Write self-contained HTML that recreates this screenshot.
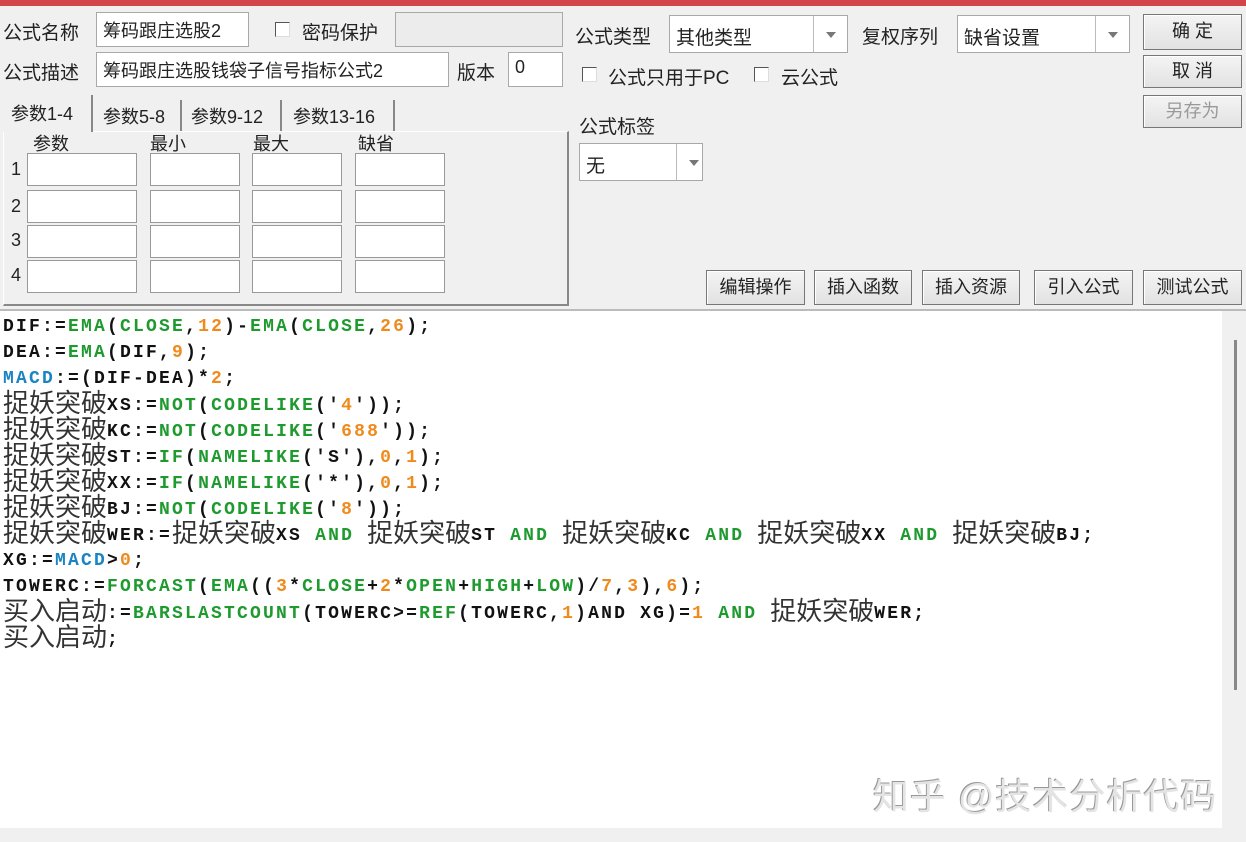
<!DOCTYPE html>
<html><head><meta charset="utf-8"><style>
*{margin:0;padding:0;box-sizing:border-box}
body{width:1246px;height:842px;background:#f0f0f0;position:relative;overflow:hidden;font-family:"Liberation Sans","Noto Sans CJK SC",sans-serif;font-size:18px;color:#222}
.a{position:absolute;white-space:nowrap}
.in{position:absolute;background:#fff;border:1px solid #a8a8a8;font-size:18px;padding:4px 0 0 6px;color:#222;white-space:nowrap}
.cb{position:absolute;width:15px;height:15px;background:#fff;border:1px solid #555;border-right-color:#ddd;border-bottom-color:#ddd}
.btn{position:absolute;border:1px solid #777;background:linear-gradient(#f4f4f4,#e2e2e2);text-align:center;font-size:18px;line-height:32px;box-shadow:inset 1px 1px 0 #fff}
.arr{position:absolute;top:0;right:0;bottom:0;border-left:1px solid #bbb;width:34px}
.arr:after{content:"";position:absolute;left:12px;top:16px;border:5px solid transparent;border-top:6px solid #777}
.code{position:absolute;left:3px;top:314px;font-family:"Liberation Mono",monospace;font-weight:bold;font-size:18px;letter-spacing:2.2px;color:#111}
.code div{height:26px;line-height:26px;white-space:nowrap}
.code .c{font-family:"Noto Sans CJK SC",sans-serif;font-weight:normal;font-size:26px;letter-spacing:0;color:#333;line-height:20px;display:inline-block;vertical-align:-2px}
.g{color:#1e9a2e}.o{color:#f08a1c}.b{color:#1b84c4}
.cell{position:absolute;width:110px;height:33px;background:#fff;border:1px solid #999}
</style></head><body>
<div class="a" style="left:0;top:0;width:1246px;height:6px;background:#d1454b"></div>

<div class="a" style="left:3px;top:18px;font-size:19px">公式名称</div>
<div class="in" style="left:96px;top:12px;width:153px;height:35px">筹码跟庄选股2</div>
<div class="cb" style="left:275px;top:22px"></div>
<div class="a" style="left:302px;top:18px;font-size:19px">密码保护</div>
<div class="in" style="left:395px;top:12px;width:168px;height:35px;background:#ececec"></div>
<div class="a" style="left:575px;top:22px;font-size:19px">公式类型</div>
<div class="in" style="left:669px;top:15px;width:179px;height:38px;padding-top:7px;font-size:19px">其他类型<div class="arr"></div></div>
<div class="a" style="left:862px;top:22px;font-size:19px">复权序列</div>
<div class="in" style="left:957px;top:15px;width:173px;height:38px;padding-top:7px;font-size:19px">缺省设置<div class="arr"></div></div>
<div class="btn" style="left:1143px;top:14px;width:99px;height:36px">确 定</div>
<div class="btn" style="left:1143px;top:55px;width:99px;height:33px;line-height:30px">取 消</div>
<div class="btn" style="left:1143px;top:95px;width:99px;height:33px;line-height:30px;color:#999">另存为</div>

<div class="a" style="left:3px;top:58px;font-size:19px">公式描述</div>
<div class="in" style="left:96px;top:52px;width:353px;height:35px">筹码跟庄选股钱袋子信号指标公式2</div>
<div class="a" style="left:457px;top:58px;font-size:19px">版本</div>
<div class="in" style="left:508px;top:52px;width:55px;height:35px">0</div>
<div class="cb" style="left:582px;top:67px"></div>
<div class="a" style="left:608px;top:63px;font-size:19px">公式只用于PC</div>
<div class="cb" style="left:754px;top:67px"></div>
<div class="a" style="left:781px;top:63px;font-size:19px">云公式</div>

<div class="a" style="left:3px;top:131px;width:566px;height:175px;border:1px solid #fff;border-right:2px solid #888;border-bottom:2px solid #888"></div>
<div class="a" style="left:3px;top:95px;width:90px;height:37px;background:#f0f0f0;border-right:2px solid #888;padding:5px 0 0 8px">参数1-4</div>
<div class="a" style="left:97px;top:100px;width:85px;height:31px;border-right:2px solid #888;padding:3px 0 0 6px">参数5-8</div>
<div class="a" style="left:185px;top:100px;width:97px;height:31px;border-right:2px solid #888;padding:3px 0 0 6px">参数9-12</div>
<div class="a" style="left:285px;top:100px;width:110px;height:31px;border-right:2px solid #888;padding:3px 0 0 8px">参数13-16</div>
<div class="a" style="left:33px;top:130px">参数</div>
<div class="a" style="left:150px;top:130px">最小</div>
<div class="a" style="left:253px;top:130px">最大</div>
<div class="a" style="left:358px;top:130px">缺省</div>
<div class="a" style="left:11px;top:159px">1</div><div class="a" style="left:11px;top:196px">2</div><div class="a" style="left:11px;top:230px">3</div><div class="a" style="left:11px;top:265px">4</div>
<div class="cell" style="left:27px;top:153px"></div><div class="cell" style="left:150px;top:153px;width:90px"></div><div class="cell" style="left:252px;top:153px;width:90px"></div><div class="cell" style="left:355px;top:153px;width:90px"></div>
<div class="cell" style="left:27px;top:190px"></div><div class="cell" style="left:150px;top:190px;width:90px"></div><div class="cell" style="left:252px;top:190px;width:90px"></div><div class="cell" style="left:355px;top:190px;width:90px"></div>
<div class="cell" style="left:27px;top:225px"></div><div class="cell" style="left:150px;top:225px;width:90px"></div><div class="cell" style="left:252px;top:225px;width:90px"></div><div class="cell" style="left:355px;top:225px;width:90px"></div>
<div class="cell" style="left:27px;top:260px"></div><div class="cell" style="left:150px;top:260px;width:90px"></div><div class="cell" style="left:252px;top:260px;width:90px"></div><div class="cell" style="left:355px;top:260px;width:90px"></div>

<div class="a" style="left:579px;top:112px;font-size:19px">公式标签</div>
<div class="in" style="left:579px;top:143px;width:124px;height:38px;padding-top:7px;font-size:19px">无<div class="arr" style="width:26px"></div></div>

<div class="btn" style="left:706px;top:270px;width:99px;height:35px">编辑操作</div>
<div class="btn" style="left:814px;top:270px;width:98px;height:35px">插入函数</div>
<div class="btn" style="left:922px;top:270px;width:98px;height:35px">插入资源</div>
<div class="btn" style="left:1034px;top:270px;width:99px;height:35px">引入公式</div>
<div class="btn" style="left:1143px;top:270px;width:99px;height:35px">测试公式</div>

<div class="a" style="left:0;top:309px;width:1246px;height:2px;background:#bbb"></div>
<div class="a" style="left:0;top:311px;width:1222px;height:517px;background:#fff"></div>
<div class="a" style="left:1222px;top:311px;width:24px;height:517px;background:#f0f0f0"></div>
<div class="a" style="left:1234px;top:340px;width:3px;height:350px;background:#888"></div>

<div class="code">
<div>DIF:=<span class="g">EMA</span>(<span class="g">CLOSE</span>,<span class="o">12</span>)-<span class="g">EMA</span>(<span class="g">CLOSE</span>,<span class="o">26</span>);</div>
<div>DEA:=<span class="g">EMA</span>(DIF,<span class="o">9</span>);</div>
<div><span class="b">MACD</span>:=(DIF-DEA)*<span class="o">2</span>;</div>
<div><span class="c">捉妖突破</span>XS:=<span class="g">NOT</span>(<span class="g">CODELIKE</span>('<span class="o">4</span>'));</div>
<div><span class="c">捉妖突破</span>KC:=<span class="g">NOT</span>(<span class="g">CODELIKE</span>('<span class="o">688</span>'));</div>
<div><span class="c">捉妖突破</span>ST:=<span class="g">IF</span>(<span class="g">NAMELIKE</span>('S'),<span class="o">0</span>,<span class="o">1</span>);</div>
<div><span class="c">捉妖突破</span>XX:=<span class="g">IF</span>(<span class="g">NAMELIKE</span>('*'),<span class="o">0</span>,<span class="o">1</span>);</div>
<div><span class="c">捉妖突破</span>BJ:=<span class="g">NOT</span>(<span class="g">CODELIKE</span>('<span class="o">8</span>'));</div>
<div><span class="c">捉妖突破</span>WER:=<span class="c">捉妖突破</span>XS <span class="g">AND</span> <span class="c">捉妖突破</span>ST <span class="g">AND</span> <span class="c">捉妖突破</span>KC <span class="g">AND</span> <span class="c">捉妖突破</span>XX <span class="g">AND</span> <span class="c">捉妖突破</span>BJ;</div>
<div>XG:=<span class="b">MACD</span>&gt;<span class="o">0</span>;</div>
<div>TOWERC:=<span class="g">FORCAST</span>(<span class="g">EMA</span>((<span class="o">3</span>*<span class="g">CLOSE</span>+<span class="o">2</span>*<span class="g">OPEN</span>+<span class="g">HIGH</span>+<span class="g">LOW</span>)/<span class="o">7</span>,<span class="o">3</span>),<span class="o">6</span>);</div>
<div><span class="c">买入启动</span>:=<span class="g">BARSLASTCOUNT</span>(TOWERC&gt;=<span class="g">REF</span>(TOWERC,<span class="o">1</span>)AND XG)=<span class="o">1</span> <span class="g">AND</span> <span class="c">捉妖突破</span>WER;</div>
<div><span class="c">买入启动</span>;</div>
</div>

<div class="a" style="left:873px;top:768px;font-size:36px;color:#e4e4e4;text-shadow:-1px -1px 0 #999;letter-spacing:1px">知乎 @技术分析代码</div>
</body></html>
